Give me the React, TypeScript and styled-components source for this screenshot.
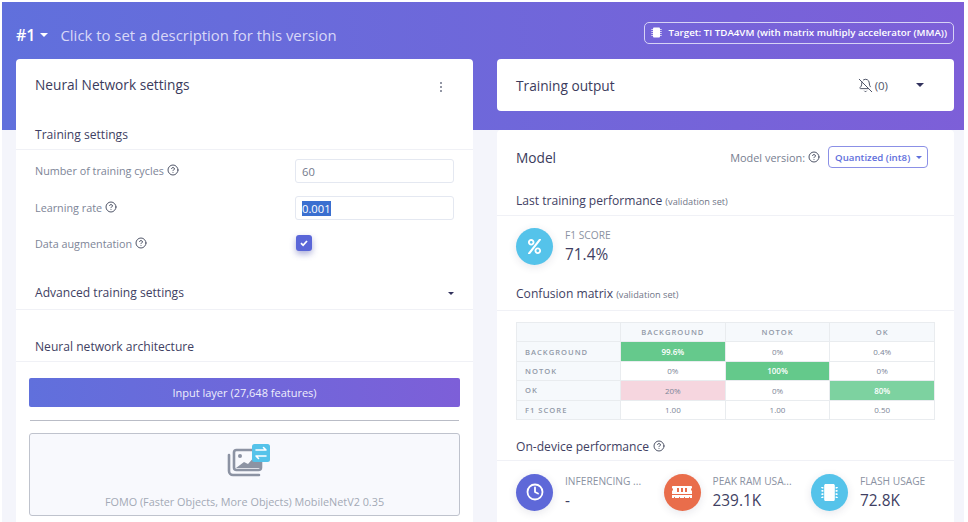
import React from "react";
import styled, { createGlobalStyle } from "styled-components";
import { BellOff, CircleHelp, Clock } from "lucide-react";
import { FaMemory, FaMicrochip, FaPercent } from "react-icons/fa";

const GlobalStyle = createGlobalStyle`
  html, body {
    margin: 0;
    height: 100%;
    overflow: hidden;
    background: #fff;
  }

  body {
    font-family: "Open Sans", "Liberation Sans", sans-serif;
    color: #32325d;
  }
`;

const Page = styled.div`
  box-sizing: border-box;
  width: 962px;
  height: 520px;
  margin: 2px 0 0 2px;
  padding: 0 10px 0 14px;
  overflow: hidden;
  background:
    linear-gradient(87deg, #6070dc, #7d5fd8) top / 100% 128px no-repeat,
    #f4f5fb;
`;

const TopBar = styled.header`
  display: flex;
  align-items: center;
  height: 57px;
  padding-top: 8px;
  box-sizing: border-box;
  color: #fff;
`;

const VersionNumber = styled.span`
  font-size: 16px;
  font-weight: 600;
`;

const Caret = styled.i<{ $color?: string; $size?: number }>`
  display: inline-block;
  flex: none;
  width: 0;
  height: 0;
  border-style: solid;
  border-color: ${(p) => p.$color ?? "#32325d"} transparent transparent;
  border-width: ${(p) => p.$size ?? 4}px ${(p) => p.$size ?? 4}px 0;
`;

const VersionCaret = styled(Caret)`
  margin-left: 5px;
`;

const VersionDescription = styled.span`
  margin-left: 12px;
  font-size: 14.9px;
  color: #d9d8f7;
`;

const TargetBadge = styled.div`
  display: flex;
  align-items: center;
  gap: 6px;
  box-sizing: border-box;
  height: 22px;
  margin-left: auto;
  margin-top: -4px;
  padding: 0 6px;
  border: 1px solid #d6d3f5;
  border-radius: 5px;
  font-size: 9.73px;
  font-weight: 600;
  white-space: nowrap;
`;

const Columns = styled.div`
  display: grid;
  grid-template-columns: 457px 457px;
  gap: 24px;
  align-items: start;
`;

const Column = styled.div`
  display: flex;
  flex-direction: column;
  gap: 19px;
`;

const Card = styled.section<{ $height?: number }>`
  box-sizing: border-box;
  height: ${(p) => (p.$height ? `${p.$height}px` : "auto")};
  background: #fff;
  border-radius: 4px;
`;

const CardHead = styled.div<{ $height: number; $raise?: boolean }>`
  display: flex;
  align-items: center;
  box-sizing: border-box;
  height: ${(p) => p.$height}px;
  padding: 0 19px ${(p) => (p.$raise ? 2 : 0)}px;
`;

const CardTitle = styled.h2`
  margin: 0;
  font-size: 13.7px;
  font-weight: 500;
  color: #3b3b5c;
`;

const KebabMenu = styled.span`
  display: flex;
  flex-direction: column;
  gap: 1.5px;
  margin: 6px 12px 0 auto;

  i {
    width: 2.5px;
    height: 2.5px;
    border-radius: 50%;
    background: #6f7587;
  }
`;

const SectionHead = styled.div<{ $height: number; $pad?: number }>`
  display: flex;
  align-items: flex-end;
  justify-content: space-between;
  box-sizing: border-box;
  height: ${(p) => p.$height}px;
  padding: 0 19px ${(p) => p.$pad ?? 6}px;
  border-bottom: 1px solid #f0f1f6;
  font-size: 12.1px;
  font-weight: 500;
  color: #3f3f63;

  small {
    font-size: 9.2px;
    font-weight: 400;
    color: #6f7587;
  }
`;

const HeadWithHelp = styled.span`
  display: flex;
  align-items: center;
  gap: 4px;
`;

const HeadCaret = styled(Caret)`
  margin-bottom: 6px;
`;

const SettingRows = styled.div`
  display: flex;
  flex-direction: column;
  gap: 13px;
  padding: 9px 19px 0;
`;

const SettingLabel = styled.div`
  display: flex;
  align-items: center;
  gap: 3px;
  padding-bottom: 2px;
  font-size: 10.8px;
  color: #7d8597;
`;

const SettingRow = styled.div<{ $compact?: boolean }>`
  display: grid;
  grid-template-columns: 260px 159px;
  align-items: center;
  height: ${(p) => (p.$compact ? 20 : 24)}px;

  ${SettingLabel} {
    padding-bottom: ${(p) => (p.$compact ? 0 : 2)}px;
  }
`;

const HelpIcon = styled(CircleHelp)`
  flex: none;
  width: 12px;
  height: 12px;
  stroke-width: 2;
  color: #4f5568;
`;

const Field = styled.div`
  display: flex;
  align-items: center;
  box-sizing: border-box;
  height: 24px;
  padding: 0 6px;
  background: #fff;
  border: 1px solid #e4e8f1;
  border-radius: 3px;
  font-size: 11.2px;
  color: #737a8c;
`;

const SelectedText = styled.span`
  background: #3a6fd0;
  color: #fff;
`;

const Checkbox = styled.span`
  display: flex;
  align-items: center;
  justify-content: center;
  width: 16px;
  height: 16px;
  margin-left: 1px;
  background: #5a66d8;
  border-radius: 3px;
  box-shadow: 0 3px 6px rgba(70, 75, 170, 0.45);
`;

const Architecture = styled.div`
  padding: 16px 13px 0;
`;

const InputLayer = styled.div`
  display: flex;
  align-items: center;
  justify-content: center;
  height: 29px;
  background: linear-gradient(87deg, #6070dc, #7d5fd8);
  border-radius: 2px;
  font-size: 11px;
  font-weight: 500;
  color: #eeeefc;
`;

const LayerDivider = styled.hr`
  height: 1px;
  margin: 13px 1px 12px;
  background: #b9bcc6;
  border: 0;
`;

const LayerBox = styled.div`
  display: flex;
  flex-direction: column;
  align-items: center;
  box-sizing: border-box;
  height: 83px;
  padding-top: 9px;
  background: #f8f9fd;
  border: 1px solid #bfc3cd;
  border-radius: 3px;

  svg {
    margin-left: 6px;
  }
`;

const LayerName = styled.div`
  margin-top: 15px;
  font-size: 10.85px;
  color: #a3a9b6;
`;

const OutputControls = styled.div`
  display: flex;
  align-items: center;
  margin-left: auto;
  margin-right: 11px;
  font-size: 11.5px;
  color: #4f5568;

  svg {
    margin-right: 2px;
  }

  i {
    margin-left: 28px;
  }
`;

const ModelVersion = styled.div`
  display: flex;
  align-items: center;
  gap: 3px;
  margin-left: auto;
  margin-right: 7px;
  font-size: 10.9px;
  color: #777e90;
`;

const VersionSelect = styled.div`
  display: flex;
  align-items: center;
  gap: 6px;
  box-sizing: border-box;
  width: 100px;
  height: 22px;
  margin-left: 5px;
  padding: 0 6px;
  border: 1px solid #8b90e6;
  border-radius: 4px;
  font-size: 9.7px;
  font-weight: 600;
  color: #5f6fdc;
  white-space: nowrap;
`;

const StatRow = styled.div<{ $top: number }>`
  display: grid;
  grid-template-columns: repeat(3, 147.5px);
  padding: ${(p) => p.$top}px 19px 0;
`;

const Stat = styled.div`
  display: flex;
  align-items: center;
  gap: 12px;
`;

const StatIcon = styled.div<{ $color: string }>`
  display: flex;
  align-items: center;
  justify-content: center;
  flex: none;
  width: 37px;
  height: 37px;
  border-radius: 50%;
  background: ${(p) => p.$color};
  color: #fff;
  box-shadow: 0 2px 8px rgba(50, 50, 93, 0.12);
`;

const StatText = styled.div`
  display: flex;
  flex-direction: column;
`;

const StatLabel = styled.div`
  font-size: 10.2px;
  line-height: 14px;
  color: #8b92a2;
  white-space: nowrap;
`;

const StatValue = styled.div`
  margin-top: 3px;
  font-size: 15.4px;
  line-height: 20px;
  font-weight: 500;
  color: #3f3f63;
`;

const MatrixWrap = styled.div`
  padding: 11px 19px 0;
`;

const Matrix = styled.table`
  width: 419px;
  border-collapse: collapse;
  table-layout: fixed;
`;

const FirstColumn = styled.col`
  width: 104px;
`;

const HeadCell = styled.th`
  height: 18.4px;
  padding: 0;
  background: #f6f9fc;
  border: 1px solid #e9ecef;
  font-size: 7.6px;
  font-weight: 600;
  letter-spacing: 1px;
  color: #9299a8;
`;

const RowCell = styled(HeadCell)`
  padding-left: 8px;
  text-align: left;
`;

const ValueCell = styled.td<{ $bg?: string; $light?: boolean }>`
  height: 18.4px;
  padding: 0;
  background: ${(p) => p.$bg ?? "#fff"};
  border: 1px solid #e9ecef;
  font-size: 8px;
  font-weight: ${(p) => (p.$light ? 600 : 400)};
  color: ${(p) => (p.$light ? "#fff" : "#7d8597")};
  text-align: center;
`;

type Cell = { value: string; bg?: string; light?: boolean };

const matrixRows: { label: string; cells: Cell[] }[] = [
  {
    label: "BACKGROUND",
    cells: [
      { value: "99.6%", bg: "#65c98c", light: true },
      { value: "0%" },
      { value: "0.4%" },
    ],
  },
  {
    label: "NOTOK",
    cells: [
      { value: "0%" },
      { value: "100%", bg: "#64c98b", light: true },
      { value: "0%" },
    ],
  },
  {
    label: "OK",
    cells: [
      { value: "20%", bg: "#f6d6df" },
      { value: "0%" },
      { value: "80%", bg: "#7dd2a0", light: true },
    ],
  },
  {
    label: "F1 SCORE",
    cells: [{ value: "1.00" }, { value: "1.00" }, { value: "0.50" }],
  },
];

const ImagesIcon = () => (
  <svg width="44" height="36" viewBox="0 0 44 36">
    <path
      d="M3 12v16a4 4 0 0 0 4 4h26"
      fill="none"
      stroke="#8c93a3"
      strokeWidth="2.6"
      strokeLinecap="round"
    />
    <rect x="8" y="7" width="27" height="20" rx="2.5" fill="#f8f9fd" stroke="#8c93a3" strokeWidth="2.6" />
    <circle cx="14" cy="13" r="2" fill="#8c93a3" />
    <path d="M10 25l8-6 4 2 8-9 4 5v8z" fill="#8c93a3" />
    <rect x="26" y="1" width="18" height="18" rx="2.5" fill="#55c3ea" />
    <path
      d="M30 7h10m-2.5-2.5L40 7M40 13H30m2.5 2.5L30 13"
      fill="none"
      stroke="#fff"
      strokeWidth="1.6"
      strokeLinecap="round"
    />
  </svg>
);

const ChipGlyph = () => (
  <svg width="11" height="11" viewBox="0 0 11 11" fill="#fff">
    <rect x="2" y="0.5" width="7" height="10" rx="1" />
    <path d="M0.5 2h1.2v1H0.5zM0.5 4h1.2v1H0.5zM0.5 6h1.2v1H0.5zM0.5 8h1.2v1H0.5zM9.3 2h1.2v1H9.3zM9.3 4h1.2v1H9.3zM9.3 6h1.2v1H9.3zM9.3 8h1.2v1H9.3z" />
  </svg>
);

export default function App() {
  return (
    <>
      <GlobalStyle />
      <Page>
        <TopBar>
          <VersionNumber>#1</VersionNumber>
          <VersionCaret $color="#fff" />
          <VersionDescription>
            Click to set a description for this version
          </VersionDescription>
          <TargetBadge>
            <ChipGlyph />
            Target: TI TDA4VM (with matrix multiply accelerator (MMA))
          </TargetBadge>
        </TopBar>

        <Columns>
          <Column>
            <Card $height={470}>
              <CardHead $height={52} $raise>
                <CardTitle>Neural Network settings</CardTitle>
                <KebabMenu>
                  <i />
                  <i />
                  <i />
                </KebabMenu>
              </CardHead>
              <SectionHead $height={39}>Training settings</SectionHead>
              <SettingRows>
                <SettingRow>
                  <SettingLabel>
                    Number of training cycles <HelpIcon />
                  </SettingLabel>
                  <Field>60</Field>
                </SettingRow>
                <SettingRow>
                  <SettingLabel>
                    Learning rate <HelpIcon />
                  </SettingLabel>
                  <Field>
                    <SelectedText>0.001</SelectedText>
                  </Field>
                </SettingRow>
                <SettingRow $compact>
                  <SettingLabel>
                    Data augmentation <HelpIcon />
                  </SettingLabel>
                  <Checkbox>
                    <svg width="10" height="10" viewBox="0 0 10 10">
                      <path
                        d="M2 5.2l2.1 2.1L8 3"
                        fill="none"
                        stroke="#fff"
                        strokeWidth="1.8"
                      />
                    </svg>
                  </Checkbox>
                </SettingRow>
              </SettingRows>
              <SectionHead $height={57} $pad={8}>
                Advanced training settings
                <HeadCaret $size={3.5} />
              </SectionHead>
              <SectionHead $height={52}>Neural network architecture</SectionHead>
              <Architecture>
                <InputLayer>Input layer (27,648 features)</InputLayer>
                <LayerDivider />
                <LayerBox>
                  <ImagesIcon />
                  <LayerName>
                    FOMO (Faster Objects, More Objects) MobileNetV2 0.35
                  </LayerName>
                </LayerBox>
              </Architecture>
            </Card>
          </Column>

          <Column>
            <Card $height={52}>
              <CardHead $height={52}>
                <CardTitle>Training output</CardTitle>
                <OutputControls>
                  <BellOff size={15} strokeWidth={1.6} />
                  (0)
                  <Caret $size={4} />
                </OutputControls>
              </CardHead>
            </Card>

            <Card $height={400}>
              <CardHead $height={54}>
                <CardTitle>Model</CardTitle>
                <ModelVersion>
                  Model version: <HelpIcon />
                  <VersionSelect>
                    Quantized (int8)
                    <Caret $color="#5f6fdc" $size={3} />
                  </VersionSelect>
                </ModelVersion>
              </CardHead>
              <SectionHead $height={32}>
                <span>
                  Last training performance <small>(validation set)</small>
                </span>
              </SectionHead>
              <StatRow $top={12}>
                <Stat>
                  <StatIcon $color="#55c3ea">
                    <FaPercent size={15} />
                  </StatIcon>
                  <StatText>
                    <StatLabel>F1 SCORE</StatLabel>
                    <StatValue>71.4%</StatValue>
                  </StatText>
                </Stat>
              </StatRow>
              <SectionHead $height={46} $pad={8}>
                <span>
                  Confusion matrix <small>(validation set)</small>
                </span>
              </SectionHead>
              <MatrixWrap>
                <Matrix>
                  <colgroup>
                    <FirstColumn />
                    <col />
                    <col />
                    <col />
                  </colgroup>
                  <thead>
                    <tr>
                      <HeadCell />
                      <HeadCell>BACKGROUND</HeadCell>
                      <HeadCell>NOTOK</HeadCell>
                      <HeadCell>OK</HeadCell>
                    </tr>
                  </thead>
                  <tbody>
                    {matrixRows.map((row) => (
                      <tr key={row.label}>
                        <RowCell as="th">{row.label}</RowCell>
                        {row.cells.map((cell, i) => (
                          <ValueCell key={i} $bg={cell.bg} $light={cell.light}>
                            {cell.value}
                          </ValueCell>
                        ))}
                      </tr>
                    ))}
                  </tbody>
                </Matrix>
              </MatrixWrap>
              <SectionHead $height={41} $pad={5}>
                <HeadWithHelp>
                  On-device performance <HelpIcon />
                </HeadWithHelp>
              </SectionHead>
              <StatRow $top={13}>
                <Stat>
                  <StatIcon $color="#5e68d8">
                    <Clock size={18} strokeWidth={2.4} />
                  </StatIcon>
                  <StatText>
                    <StatLabel>INFERENCING ...</StatLabel>
                    <StatValue>-</StatValue>
                  </StatText>
                </Stat>
                <Stat>
                  <StatIcon $color="#e96d4b">
                    <FaMemory size={20} />
                  </StatIcon>
                  <StatText>
                    <StatLabel>PEAK RAM USA...</StatLabel>
                    <StatValue>239.1K</StatValue>
                  </StatText>
                </Stat>
                <Stat>
                  <StatIcon $color="#55c3ea">
                    <FaMicrochip size={17} />
                  </StatIcon>
                  <StatText>
                    <StatLabel>FLASH USAGE</StatLabel>
                    <StatValue>72.8K</StatValue>
                  </StatText>
                </Stat>
              </StatRow>
            </Card>
          </Column>
        </Columns>
      </Page>
    </>
  );
}
